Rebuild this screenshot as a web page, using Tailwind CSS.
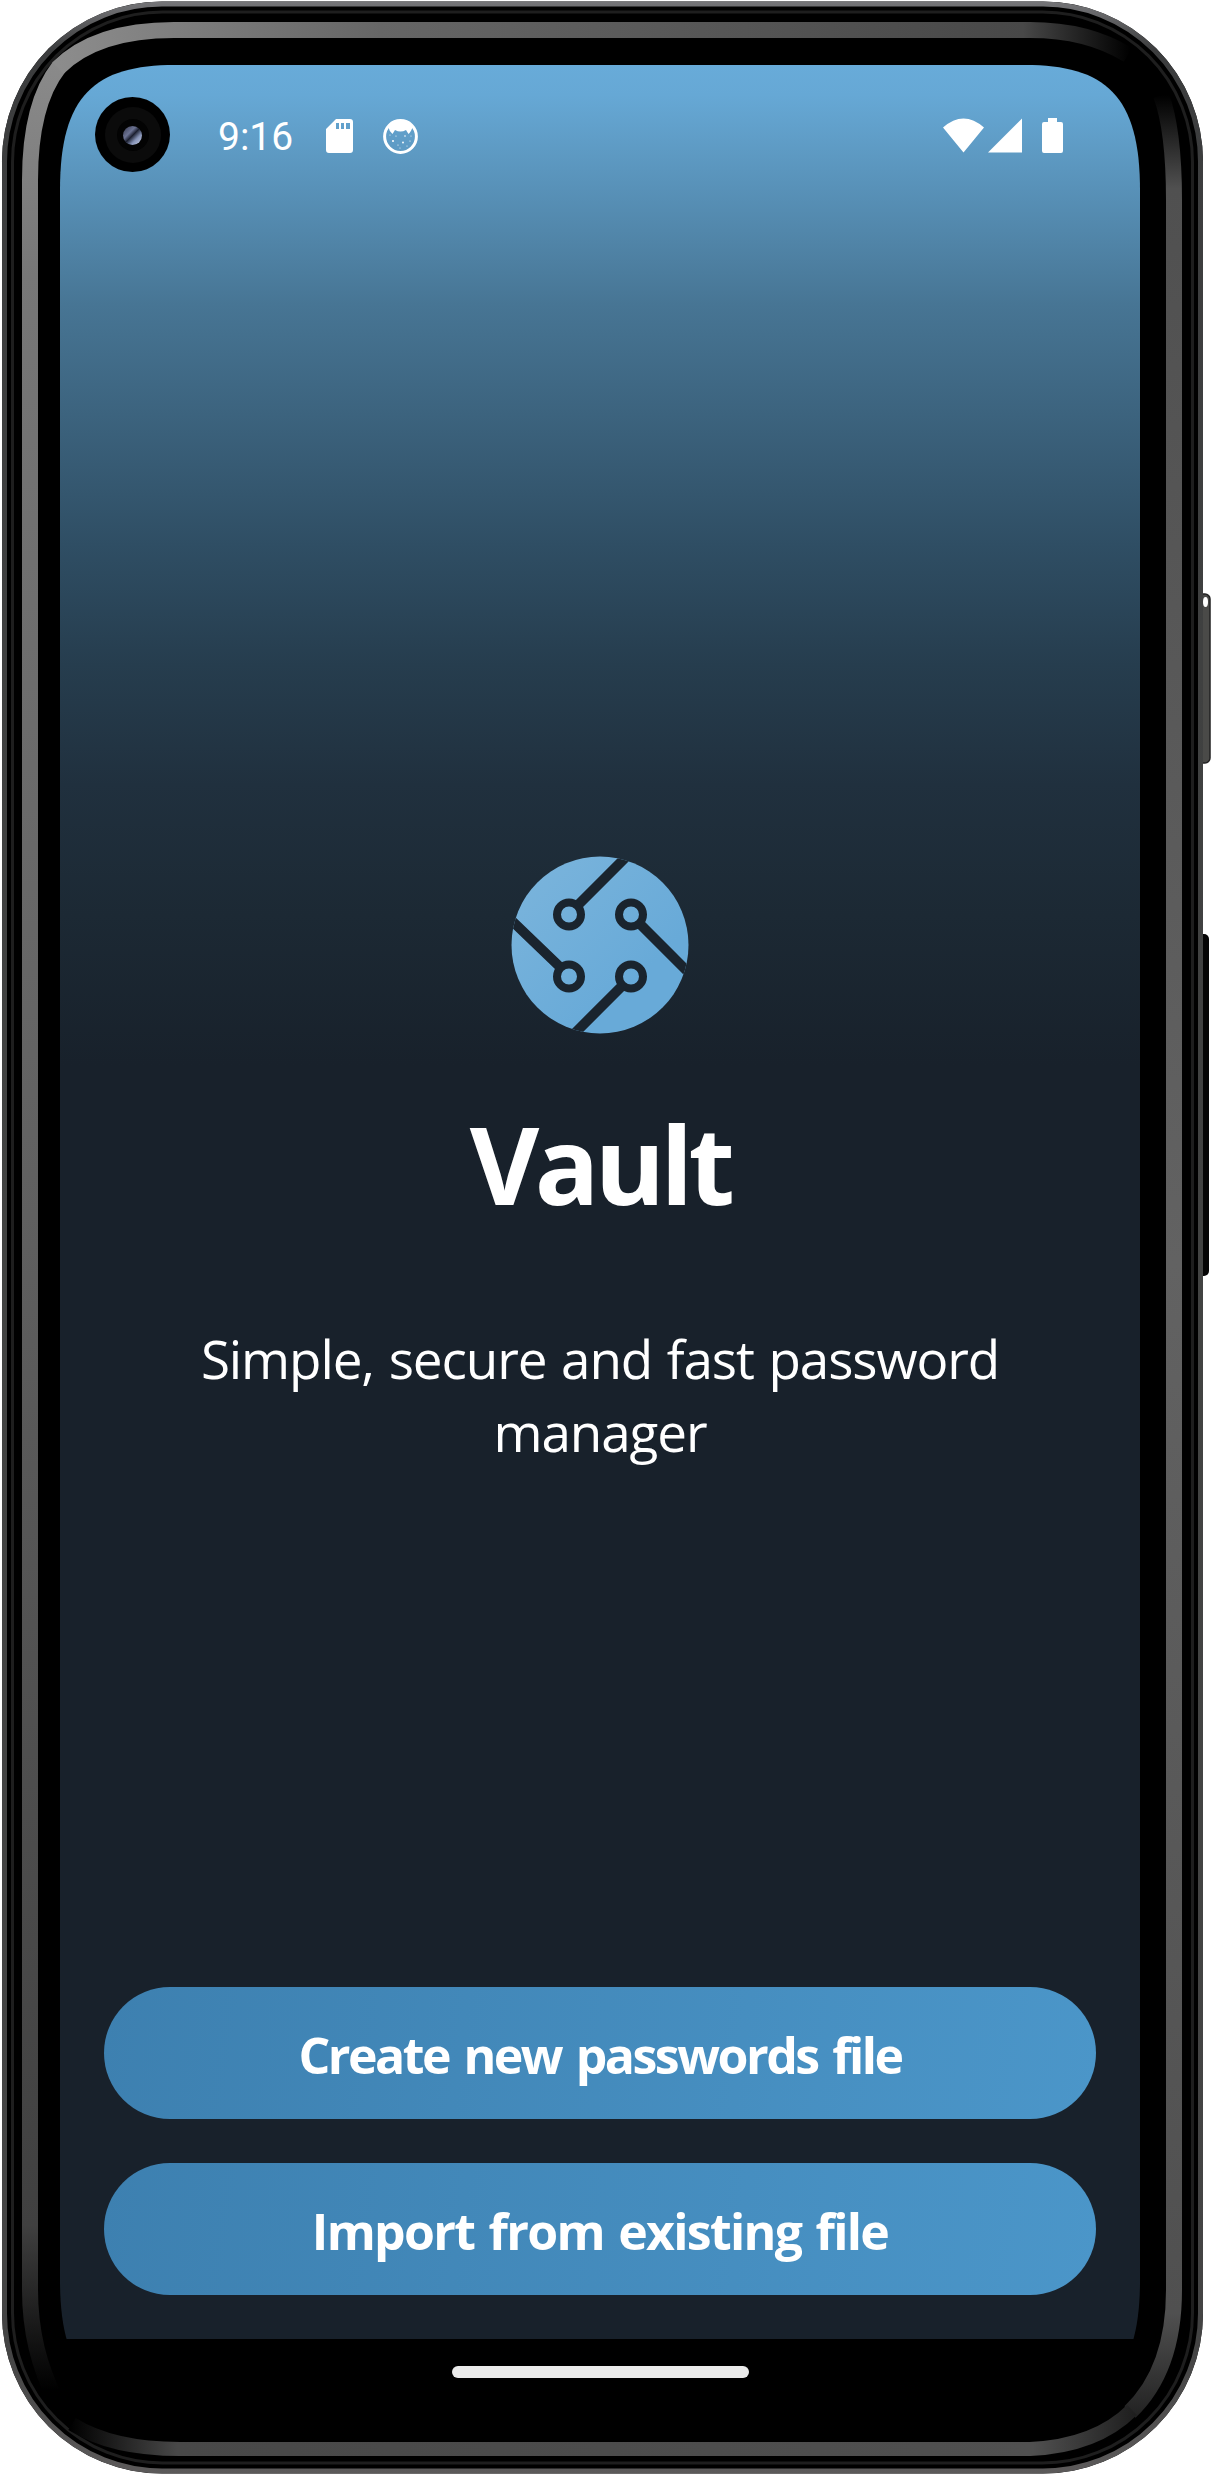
<!DOCTYPE html>
<html lang="en">
<head>
<meta charset="utf-8">
<title>Vault</title>
<script src="https://cdn.jsdelivr.net/npm/@tailwindcss/browser@4"></script>
</head>
<body class="bg-white">
<div class="relative h-[2474px] w-[1211px] overflow-hidden pt-[65px] pl-[60px]">
  <!-- Phone body -->
  <svg class="absolute inset-0" width="1211" height="2474" viewBox="0 0 1211 2474" fill="none">
    <defs>
      <linearGradient id="edge" gradientUnits="userSpaceOnUse" x1="0" y1="0" x2="0" y2="2474">
        <stop offset="0" stop-color="#77777a"/><stop offset=".02" stop-color="#3c3d3e"/><stop offset=".5" stop-color="#424342"/><stop offset=".95" stop-color="#444"/><stop offset="1" stop-color="#5c5a5a"/>
      </linearGradient>
      <linearGradient id="hl" gradientUnits="userSpaceOnUse" x1="0" y1="40" x2="0" y2="2390">
        <stop offset="0" stop-color="#8c8c8c"/><stop offset=".1" stop-color="#777"/><stop offset=".5" stop-color="#606060"/><stop offset=".93" stop-color="#404040"/><stop offset="1" stop-color="#000"/>
      </linearGradient>
      <linearGradient id="ht" gradientUnits="userSpaceOnUse" x1="60" y1="0" x2="1130" y2="0">
        <stop offset="0" stop-color="#8c8c8c"/><stop offset=".3" stop-color="#666"/><stop offset=".9" stop-color="#484848"/><stop offset="1" stop-color="#000"/>
      </linearGradient>
      <linearGradient id="hr" gradientUnits="userSpaceOnUse" x1="0" y1="95" x2="0" y2="2430">
        <stop offset="0" stop-color="#000"/><stop offset=".04" stop-color="#505050"/><stop offset=".5" stop-color="#626262"/><stop offset=".95" stop-color="#505050"/><stop offset="1" stop-color="#1c1c1c"/>
      </linearGradient>
      <linearGradient id="hb" gradientUnits="userSpaceOnUse" x1="70" y1="0" x2="1140" y2="0">
        <stop offset="0" stop-color="#000"/><stop offset=".1" stop-color="#484848"/><stop offset=".9" stop-color="#505050"/><stop offset="1" stop-color="#1c1c1c"/>
      </linearGradient>
    </defs>
    <rect x="1198" y="594" width="12" height="169" rx="5" fill="#4a4a48" stroke="#222" stroke-width="1.5"/>
    <ellipse cx="1205.500" cy="602" rx="2.500" ry="5" fill="#fff"/>
    <rect x="1198" y="934" width="11" height="342" rx="5" fill="#050505"/>
    <rect x="2" y="1.500" width="1201" height="2472" rx="160" fill="#000"/>
    <rect x="4.500" y="4" width="1196" height="2467" rx="157.500" stroke="url(#edge)" stroke-width="5"/>
    <rect x="12.500" y="12" width="1180" height="2451" rx="150" stroke="#1e1e1e" stroke-width="3"/>
    <path d="M59 67Q30 104 30 180V2290Q30 2350 56 2400" stroke="url(#hl)" stroke-width="16"/>
    <path d="M58 68Q96 30 174 30H1030Q1088 30 1128 55" stroke="url(#ht)" stroke-width="16"/>
    <path d="M1161 95Q1174 130 1174 200V2290Q1174 2370 1130 2412" stroke="url(#hr)" stroke-width="16"/>
    <path d="M72 2424Q112 2449 180 2449H1030Q1096 2446 1132 2410" stroke="url(#hb)" stroke-width="14"/>
  </svg>

  <main class="relative flex h-[2340px] w-[1080px] flex-col bg-black [clip-path:path('M0_125C0_30_35_0_115_0H965C1045_0_1080_30_1080_125V2215C1080_2310_1045_2340_965_2340H115C35_2340_0_2310_0_2215Z')]">
    <div class="flex h-[2274px] flex-col bg-[linear-gradient(180deg,#68abd9_0px,#66a8d5_30px,#477594_240px,#2f4e64_480px,#263d4e_600px,#20303e_720px,#1c2934_850px,#18212b_1000px,#18212b_100%)] px-11 pb-11">
      <header class="flex h-[142px] shrink-0 items-center">
        <svg class="-mt-[3px] -ml-[9px]" width="75" height="75" viewBox="0 0 75 75">
          <defs><linearGradient id="lens" x1="0" y1="0" x2="1" y2="1"><stop stop-color="#34364a"/><stop offset=".35" stop-color="#6c7394"/><stop offset=".5" stop-color="#1c2030"/><stop offset=".7" stop-color="#8794b8"/><stop offset="1" stop-color="#c4cce0"/></linearGradient></defs>
          <circle cx="37.500" cy="37.500" r="37.500" fill="#000"/><circle cx="38" cy="38" r="28" fill="#0b0b0b"/><circle cx="38" cy="38" r="16" fill="#030303"/><circle cx="37.500" cy="38.500" r="9.500" fill="url(#lens)"/>
        </svg>
        <span class="mt-[3px] ml-[48px] w-[76px] whitespace-nowrap font-[Roboto,sans-serif] text-[39px] leading-none text-white">9:16</span>
        <svg class="ml-[32px]" width="27" height="34" viewBox="0 0 27 34" fill="#fff"><path fill-rule="evenodd" d="M10 0H24Q27 0 27 3V31Q27 34 24 34H3Q0 34 0 31V10ZM10 4V10H13V4ZM15 4V10H18V4ZM20 4V10H24V4Z"/></svg>
        <svg class="ml-[30px]" width="35" height="35" viewBox="0 0 35 35" fill="#fff"><circle cx="17.500" cy="17.500" r="15.900" fill="none" stroke="#fff" stroke-width="3"/><path d="M5 7Q17-4 30 7Q28 13 25.500 15L23 11Q17.500 14 12 11L9.500 15Q6 12 5 7Z"/><circle cx="10" cy="22" r="1"/><circle cx="20" cy="23.500" r=".9"/><circle cx="22" cy="17" r=".8"/><circle cx="13" cy="17" r=".6"/><circle cx="27" cy="22" r=".6"/><circle cx="15" cy="26" r=".6"/><circle cx="24" cy="27" r=".5"/><circle cx="7" cy="16" r=".5"/><circle cx="17" cy="29" r=".5"/><circle cx="28" cy="17" r=".5"/></svg>
        <svg class="ml-auto mr-[33px]" width="120" height="36" viewBox="943 118 120 36" fill="#fff"><path d="M943 127.500Q963.500 109.500 984 127.500L963.500 152.500ZM988 152.500L1022 118.500V152.500ZM1048 118H1057V122H1061Q1063 122 1063 124V151Q1063 153 1061 153H1044Q1042 153 1042 151V124Q1042 122 1044 122H1048Z"/></svg>
      </header>
      <section class="mt-[649px] flex flex-col items-center text-center font-['Open_Sans','Noto_Sans',sans-serif] text-white">
        <svg width="178" height="178" viewBox="0 0 178 178" fill="none">
          <defs><linearGradient id="logo" x1="0" y1="0" x2=".7" y2=".7"><stop stop-color="#7cb5dc"/><stop offset="1" stop-color="#68aad8"/></linearGradient><clipPath id="disc"><circle cx="89" cy="89" r="88.500"/></clipPath></defs>
          <circle cx="89" cy="89" r="88.500" fill="url(#logo)"/>
          <g stroke="#1a242e" clip-path="url(#disc)"><g stroke-width="8"><circle cx="58" cy="58.500" r="12"/><circle cx="120" cy="58.500" r="12"/><circle cx="58" cy="120.500" r="12"/><circle cx="120" cy="120.500" r="12"/></g><path stroke-width="10" d="M67 49L117-1M129 68L181 120M49 111L-3 61M111 130L61 180"/></g>
        </svg>
        <h1 class="mt-[57px] h-[146px] whitespace-nowrap text-[107px] font-bold leading-[146px] tracking-[-4.6px]">Vault</h1>
        <p class="mt-[85px] w-[860px] text-[53px] leading-[73px] tracking-[-1.1px] [word-spacing:2px]">Simple, secure and fast password<br>manager</p>
      </section>
      <div class="mt-auto flex flex-col gap-11 font-['Open_Sans','Noto_Sans',sans-serif] text-[50px] font-bold text-white">
        <button class="h-[132px] whitespace-nowrap rounded-full bg-[linear-gradient(98deg,#3d80b0,#4b96c9)] pt-1 tracking-[-2.5px] [word-spacing:4px]"><span>Create new passwords file</span></button>
        <button class="h-[132px] whitespace-nowrap rounded-full bg-[linear-gradient(98deg,#3d80b0,#4b96c9)] pt-1 tracking-[-1.7px] [word-spacing:3px]"><span>Import from existing file</span></button>
      </div>
    </div>
    <div class="flex h-[66px] items-center justify-center"><div class="h-3 w-[297px] rounded-full bg-[#ebebeb]"></div></div>
  </main>
</div>
</body>
</html>
